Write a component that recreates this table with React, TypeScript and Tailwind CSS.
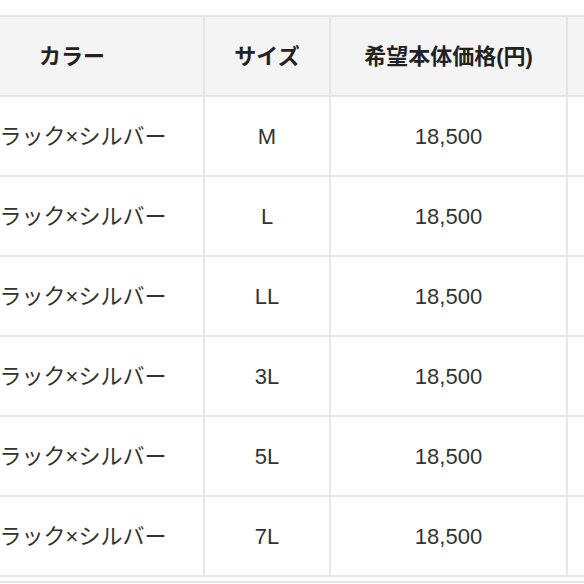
const rows = ["M", "L", "LL", "3L", "5L", "7L"];

const cell = "border-2 border-[#e6e6e6] text-center";

export default function App() {
  return (
    <div
      className="w-[584px] h-[584px] overflow-hidden bg-white pt-[15px] text-[#333]"
      style={{ fontFamily: '"Liberation Sans", "Noto Sans CJK JP", sans-serif' }}
    >
      <table className="ml-[-61px] w-[844px] table-fixed border-collapse text-[22px]">
        <colgroup>
          <col className="w-[264px]" />
          <col className="w-[126px]" />
          <col className="w-[237px]" />
          <col className="w-[217px]" />
        </colgroup>
        <thead>
          <tr className="h-[80px] bg-[#f4f4f4] text-[#222]">
            <th className={`${cell} font-bold`}>カラー</th>
            <th className={`${cell} font-bold`}>サイズ</th>
            <th className={`${cell} font-bold`}>希望本体価格(円)</th>
            <th className={cell}></th>
          </tr>
        </thead>
        <tbody>
          {rows.map((size) => (
            <tr key={size} className="h-[80px]">
              <td className={cell}>ブラック×シルバー</td>
              <td className={cell}>{size}</td>
              <td className={cell}>18,500</td>
              <td className={cell}></td>
            </tr>
          ))}
        </tbody>
      </table>
      <div className="mt-[4px] border-t-2 border-[#e6e6e6]" />
    </div>
  );
}
